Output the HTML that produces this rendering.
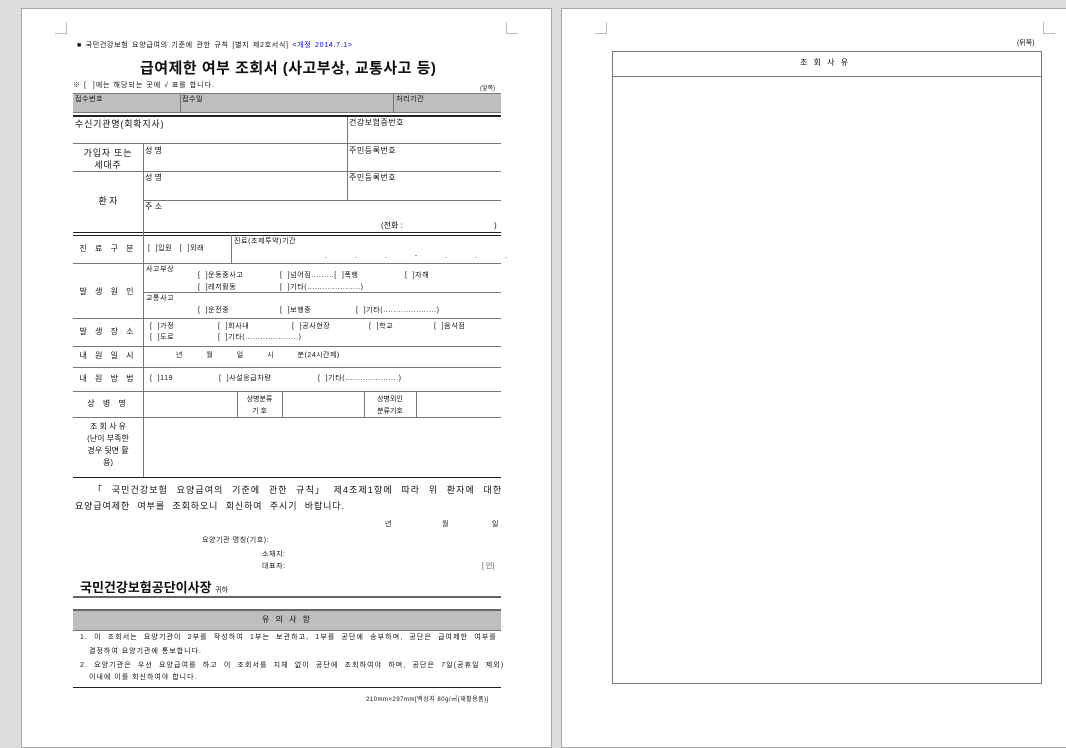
<!DOCTYPE html>
<html><head><meta charset="utf-8">
<style>
*{margin:0;padding:0;box-sizing:border-box}
body{width:1066px;height:730px;background:#dcdcdc;position:relative;overflow:hidden;font-family:"Liberation Sans","Noto Sans CJK KR","NanumGothic",sans-serif;color:#111}
.pg{position:absolute;background:#fff;border:1px solid #a8a8a8}
.h{position:absolute;height:1px;background:#777}
.v{position:absolute;width:1px;background:#777}
.t{position:absolute;font-size:8px;white-space:nowrap;line-height:1}
.c{text-align:center}
.cm{position:absolute;border-color:#bbb;border-style:solid;width:12px;height:12px}
.s{font-size:7px;letter-spacing:0.6px}
</style></head><body>
<div class="pg" style="left:21px;top:8px;width:531px;height:740px"></div>
<div class="pg" style="left:561px;top:8px;width:520px;height:740px"></div>
<div class="cm" style="left:55px;top:22px;border-width:0 1px 1px 0"></div>
<div class="cm" style="left:506px;top:22px;border-width:0 0 1px 1px"></div>
<div class="cm" style="left:595px;top:22px;border-width:0 1px 1px 0"></div>
<div class="cm" style="left:1043px;top:22px;border-width:0 0 1px 1px"></div>

<!-- right page -->
<div class="t" style="left:1017px;top:40px;font-size:7px">(뒤쪽)</div>
<div style="position:absolute;left:612px;top:51px;width:430px;height:633px;border:1px solid #777"></div>
<div class="h" style="left:612px;top:76px;width:430px"></div>
<div class="t" style="left:800px;top:59px;font-size:8px;letter-spacing:2px">조 회 사 유</div>

<!-- left page -->
<div class="t" style="left:77px;top:42px;font-size:7px;letter-spacing:0.7px;word-spacing:1px">■ 국민건강보험 요양급여의 기준에 관한 규칙 [별지 제2호서식] <span style="color:#00f">&lt;개정 2014.7.1&gt;</span></div>
<div class="t" style="left:140px;top:61px;font-size:15px;font-weight:bold;letter-spacing:0.5px">급여제한 여부 조회서 (사고부상, 교통사고 등)</div>
<div class="t s" style="left:73px;top:82px;letter-spacing:1px">※ [ &nbsp;]에는 해당되는 곳에 √ 표를 합니다.</div>
<div class="t" style="left:480px;top:86px;font-size:6px">(앞쪽)</div>

<div style="position:absolute;left:73px;top:93px;width:428px;height:20px;background:#bebebe;border-top:1px solid #777;border-bottom:1px solid #777"></div>
<div class="v" style="left:180px;top:93px;height:20px"></div>
<div class="v" style="left:393px;top:93px;height:20px"></div>
<div class="t s" style="left:75px;top:96px">접수번호</div>
<div class="t s" style="left:182px;top:96px">접수일</div>
<div class="t s" style="left:396px;top:96px">처리기간</div>

<div class="h" style="left:73px;top:115px;width:428px;height:2px;background:#222"></div>
<div class="h" style="left:73px;top:143px;width:428px"></div>
<div class="h" style="left:73px;top:171px;width:428px"></div>
<div class="h" style="left:143px;top:200px;width:358px"></div>
<div class="h" style="left:73px;top:232px;width:428px;background:#222"></div>
<div class="h" style="left:73px;top:235px;width:428px;background:#222"></div>
<div class="v" style="left:347px;top:117px;height:83px"></div>
<div class="v" style="left:143px;top:143px;height:335px"></div>
<div class="t" style="left:75px;top:120px;font-size:9px;letter-spacing:0.8px">수신기관명(회확지사)</div>
<div class="t" style="left:349px;top:119px;font-size:8px;letter-spacing:0.5px">건강보험증번호</div>
<div class="t c" style="left:73px;top:147px;width:70px;font-size:9px;line-height:12px;letter-spacing:0.8px">가입자 또는<br>세대주</div>
<div class="t" style="left:145px;top:147px">성 명</div>
<div class="t" style="left:349px;top:147px;letter-spacing:0.5px">주민등록번호</div>
<div class="t" style="left:145px;top:174px">성 명</div>
<div class="t" style="left:349px;top:174px;letter-spacing:0.5px">주민등록번호</div>
<div class="t c" style="left:73px;top:197px;width:70px;font-size:9px">환 자</div>
<div class="t" style="left:145px;top:203px">주 소</div>
<div class="t" style="left:381px;top:222px">(전화 :</div>
<div class="t" style="left:494px;top:222px">)</div>

<div class="h" style="left:73px;top:263px;width:428px"></div>
<div class="h" style="left:143px;top:292px;width:358px"></div>
<div class="h" style="left:73px;top:318px;width:428px"></div>
<div class="h" style="left:73px;top:346px;width:428px"></div>
<div class="h" style="left:73px;top:367px;width:428px"></div>
<div class="h" style="left:73px;top:391px;width:428px"></div>
<div class="h" style="left:73px;top:417px;width:428px"></div>
<div class="h" style="left:73px;top:477px;width:428px;background:#222"></div>
<div class="v" style="left:231px;top:235px;height:28px"></div>
<div class="v" style="left:237px;top:391px;height:26px"></div>
<div class="v" style="left:282px;top:391px;height:26px"></div>
<div class="v" style="left:364px;top:391px;height:26px"></div>
<div class="v" style="left:416px;top:391px;height:26px"></div>

<div class="t c" style="left:73px;top:245px;width:70px;letter-spacing:3px">진 료 구 분</div>
<div class="t s" style="left:148px;top:245px">[ &nbsp;]입원 &nbsp; [ &nbsp;]외래</div>
<div class="t s" style="left:234px;top:238px">진료(조제투약)기간</div>
<div class="t" style="left:325px;top:253px;font-size:7px;letter-spacing:28px">...‑...</div>
<div class="t c" style="left:73px;top:288px;width:70px;letter-spacing:3px">발 생 원 인</div>
<div class="t s" style="left:146px;top:266px">사고부상</div>
<div class="t s" style="left:198px;top:272px">[ &nbsp;]운동중사고</div>
<div class="t s" style="left:280px;top:272px">[ &nbsp;]넘어짐.........[ &nbsp;]폭행</div>
<div class="t s" style="left:405px;top:272px">[ &nbsp;]자해</div>
<div class="t s" style="left:198px;top:284px">[ &nbsp;]레저활동</div>
<div class="t s" style="left:280px;top:284px">[ &nbsp;]기타(.....................)</div>
<div class="t s" style="left:146px;top:295px">교통사고</div>
<div class="t s" style="left:198px;top:307px">[ &nbsp;]운전중</div>
<div class="t s" style="left:280px;top:307px">[ &nbsp;]보행중</div>
<div class="t s" style="left:356px;top:307px">[ &nbsp;]기타(.....................)</div>
<div class="t c" style="left:73px;top:328px;width:70px;letter-spacing:3px">발 생 장 소</div>
<div class="t s" style="left:150px;top:323px">[ &nbsp;]가정</div>
<div class="t s" style="left:218px;top:323px">[ &nbsp;]회사내</div>
<div class="t s" style="left:292px;top:323px">[ &nbsp;]공사현장</div>
<div class="t s" style="left:369px;top:323px">[ &nbsp;]학교</div>
<div class="t s" style="left:434px;top:323px">[ &nbsp;]음식점</div>
<div class="t s" style="left:150px;top:334px">[ &nbsp;]도로</div>
<div class="t s" style="left:218px;top:334px">[ &nbsp;]기타(.....................)</div>
<div class="t c" style="left:73px;top:352px;width:70px;letter-spacing:3px">내 원 일 시</div>
<div class="t" style="left:176px;top:352px;font-size:7px;word-spacing:22px">년 월 일 시 <span style="word-spacing:0;letter-spacing:0.5px">분(24시간제)</span></div>
<div class="t c" style="left:73px;top:375px;width:70px;letter-spacing:3px">내 원 방 법</div>
<div class="t s" style="left:150px;top:375px">[ &nbsp;]119</div>
<div class="t s" style="left:219px;top:375px">[ &nbsp;]사설응급차량</div>
<div class="t s" style="left:318px;top:375px">[ &nbsp;]기타(.....................)</div>
<div class="t c" style="left:73px;top:400px;width:70px;letter-spacing:3px">상 병 명</div>
<div class="t c" style="left:237px;top:394px;width:45px;font-size:7px;line-height:12px">상병분류<br>기 호</div>
<div class="t c" style="left:364px;top:394px;width:52px;font-size:7px;line-height:12px">상병외인<br>분류기호</div>
<div class="t c" style="left:73px;top:421px;width:70px;font-size:8px;line-height:12px">조 회 사 유<br>(난이 부족한<br>경우 뒷면 활<br>용)</div>

<div class="t" style="left:93px;top:486px;font-size:9px;letter-spacing:1.1px;word-spacing:5px">「 국민건강보험 요양급여의 기준에 관한 규칙」 제4조제1항에 따라 위 환자에 대한</div>
<div class="t" style="left:75px;top:502px;font-size:9px;word-spacing:4px;letter-spacing:0.9px">요양급여제한 여부를 조회하오니 회신하여 주시기 바랍니다.</div>
<div class="t" style="left:385px;top:521px;font-size:7px">년</div>
<div class="t" style="left:442px;top:521px;font-size:7px">월</div>
<div class="t" style="left:492px;top:521px;font-size:7px">일</div>
<div class="t s" style="left:202px;top:537px">요양기관 명칭(기호):</div>
<div class="t s" style="left:262px;top:551px">소재지:</div>
<div class="t s" style="left:262px;top:563px">대표자:</div>
<div class="t" style="left:482px;top:563px;font-size:7px;color:#555">[ 인]</div>
<div class="t" style="left:80px;top:581px;font-size:13px;font-weight:bold">국민건강보험공단이사장 <span style="font-size:7px;font-weight:normal">귀하</span></div>
<div class="h" style="left:73px;top:596px;width:428px;height:2px;background:#666"></div>
<div style="position:absolute;left:73px;top:609px;width:428px;height:22px;background:#bebebe;border-top:2px solid #666;border-bottom:1px solid #777"></div>
<div class="t c" style="left:73px;top:616px;width:428px;font-size:8px;letter-spacing:2px">유 의 사 항</div>
<div class="t" style="left:80px;top:634px;font-size:7px;letter-spacing:1.1px;word-spacing:3px">1. 이 조회서는 요양기관이 2부를 작성하여 1부는 보관하고, 1부를 공단에 송부하며, 공단은 급여제한 여부를</div>
<div class="t" style="left:89px;top:648px;font-size:7px;letter-spacing:1px">결정하여 요양기관에 통보합니다.</div>
<div class="t" style="left:80px;top:662px;font-size:7px;letter-spacing:1.1px;word-spacing:3px">2. 요양기관은 우선 요양급여를 하고 이 조회서를 지체 없이 공단에 조회하여야 하며, 공단은 7일(공휴일 제외)</div>
<div class="t" style="left:89px;top:674px;font-size:7px;letter-spacing:1px">이내에 이를 회신하여야 합니다.</div>
<div class="h" style="left:73px;top:687px;width:428px;background:#222"></div>
<div class="t" style="left:366px;top:697px;font-size:6px;letter-spacing:0.5px">210mm×297mm[백상지 80g/㎡(재활용품)]</div>
</body></html>
